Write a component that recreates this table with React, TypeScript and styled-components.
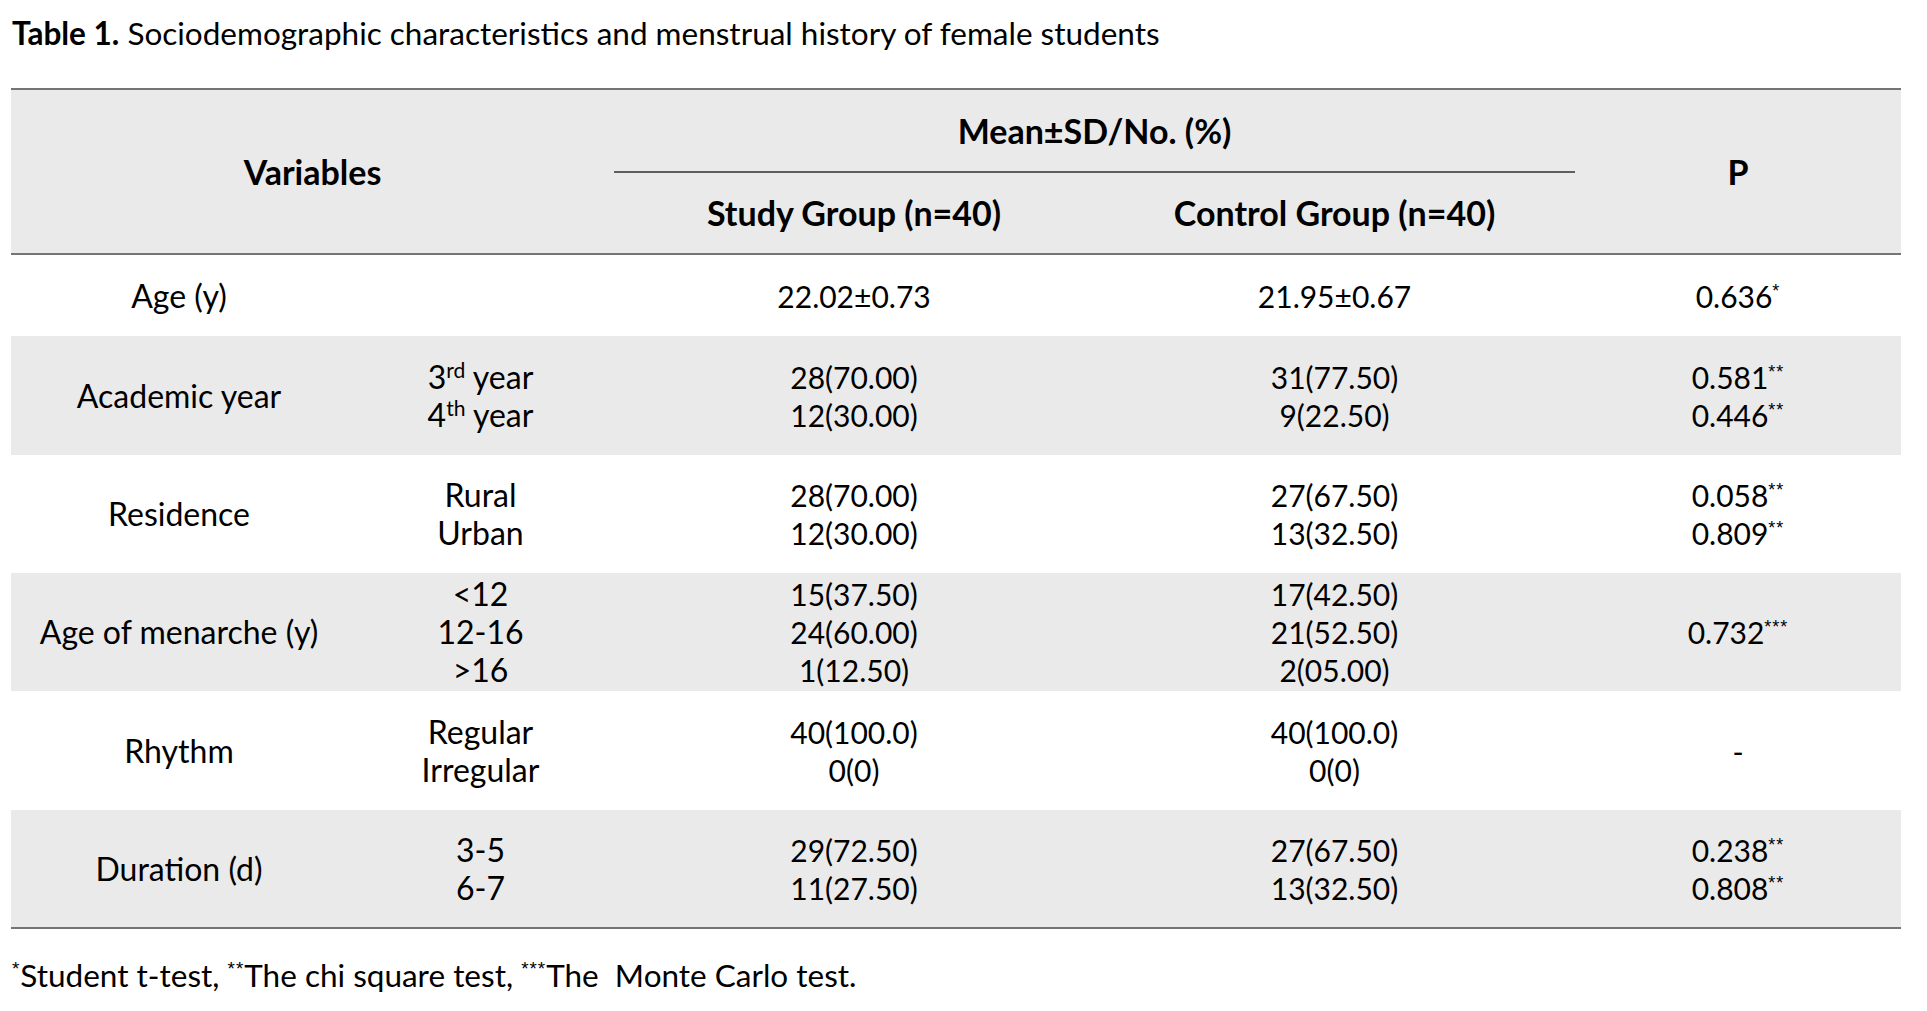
import React from "react";
import styled, { createGlobalStyle } from "styled-components";

const Global = createGlobalStyle`
  html, body { margin: 0; padding: 0; background: #ffffff; }
  body { font-family: Lato, "Open Sans", "Liberation Sans", sans-serif; color: #000; }
`;

const Page = styled.div`
  padding: 14px 26px 20px 11px;
  width: 1890px;
`;

const Title = styled.div`
  font-size: 31.5px;
  line-height: 38px;
  padding-left: 1px;
  margin-bottom: 36px;
  white-space: nowrap;
  b { font-weight: 700; }
`;

const Table = styled.table`
  width: 1890px;
  table-layout: fixed;
  border-collapse: separate;
  border-spacing: 0;
  line-height: 38px;
`;

const HeadCell = styled.th<{ $top?: boolean; $bottom?: boolean; $under?: boolean; $h: number }>`
  background: #eaeaea;
  font-weight: 700;
  font-size: 34px;
  text-align: center;
  vertical-align: middle;
  padding: 0;
  height: ${(p) => p.$h}px;
  border-top: ${(p) => (p.$top ? "2px solid #747474" : "none")};
  border-bottom: ${(p) =>
    p.$bottom ? "2px solid #747474" : p.$under ? "2px solid #5e5e5e" : "none"};
`;

const Cell = styled.td<{ $shaded: boolean; $h: number; $last: boolean; $text?: boolean }>`
  background: ${(p) => (p.$shaded ? "#eaeaea" : "#ffffff")};
  font-size: ${(p) => (p.$text ? "32px" : "30px")};
  text-align: center;
  vertical-align: middle;
  padding: 0;
  height: ${(p) => p.$h}px;
  border-bottom: ${(p) => (p.$last ? "2px solid #747474" : "none")};
`;

const Line = styled.div`
  white-space: nowrap;
`;

const Sup = styled.sup<{ $mark?: boolean }>`
  font-family: ${(p) => (p.$mark ? '"Liberation Sans", sans-serif' : "inherit")};
  font-size: ${(p) => (p.$mark ? "0.6em" : "0.66em")};
  line-height: 0;
  vertical-align: ${(p) => (p.$mark ? "0.62em" : "0.5em")};
  letter-spacing: ${(p) => (p.$mark ? "1px" : "0")};
`;

const Footnote = styled.div`
  margin-top: 27px;
  font-size: 31.5px;
  line-height: 38px;
  padding-left: 1px;
  white-space: pre;
`;

type Val = { t: string; s?: string; after?: string };
type Row = {
  label: string;
  sub: Val[];
  study: Val[];
  control: Val[];
  p: Val[];
  h: number;
  shaded: boolean;
};

const rows: Row[] = [
  {
    label: "Age (y)",
    sub: [],
    study: [{ t: "22.02±0.73" }],
    control: [{ t: "21.95±0.67" }],
    p: [{ t: "0.636", s: "*" }],
    h: 81,
    shaded: false,
  },
  {
    label: "Academic year",
    sub: [
      { t: "3", s: "rd", after: " year" },
      { t: "4", s: "th", after: " year" },
    ],
    study: [{ t: "28(70.00)" }, { t: "12(30.00)" }],
    control: [{ t: "31(77.50)" }, { t: "9(22.50)" }],
    p: [
      { t: "0.581", s: "**" },
      { t: "0.446", s: "**" },
    ],
    h: 119,
    shaded: true,
  },
  {
    label: "Residence",
    sub: [{ t: "Rural" }, { t: "Urban" }],
    study: [{ t: "28(70.00)" }, { t: "12(30.00)" }],
    control: [{ t: "27(67.50)" }, { t: "13(32.50)" }],
    p: [
      { t: "0.058", s: "**" },
      { t: "0.809", s: "**" },
    ],
    h: 118,
    shaded: false,
  },
  {
    label: "Age of menarche (y)",
    sub: [{ t: "<12" }, { t: "12-16" }, { t: ">16" }],
    study: [{ t: "15(37.50)" }, { t: "24(60.00)" }, { t: "1(12.50)" }],
    control: [{ t: "17(42.50)" }, { t: "21(52.50)" }, { t: "2(05.00)" }],
    p: [{ t: "0.732", s: "***" }],
    h: 118,
    shaded: true,
  },
  {
    label: "Rhythm",
    sub: [{ t: "Regular" }, { t: "Irregular" }],
    study: [{ t: "40(100.0)" }, { t: "0(0)" }],
    control: [{ t: "40(100.0)" }, { t: "0(0)" }],
    p: [{ t: "-" }],
    h: 119,
    shaded: false,
  },
  {
    label: "Duration (d)",
    sub: [{ t: "3-5" }, { t: "6-7" }],
    study: [{ t: "29(72.50)" }, { t: "11(27.50)" }],
    control: [{ t: "27(67.50)" }, { t: "13(32.50)" }],
    p: [
      { t: "0.238", s: "**" },
      { t: "0.808", s: "**" },
    ],
    h: 117,
    shaded: true,
  },
];

const Lines: React.FC<{ vals: Val[] }> = ({ vals }) => (
  <>
    {vals.map((v, i) => (
      <Line key={i}>
        {v.t}
        {v.s && <Sup $mark={v.s.startsWith("*")}>{v.s}</Sup>}
        {v.after}
      </Line>
    ))}
  </>
);

export default function App() {
  return (
    <>
      <Global />
      <Page>
        <Title>
          <b>Table 1.</b> Sociodemographic characteristics and menstrual history of female students
        </Title>
        <Table>
          <colgroup>
            <col style={{ width: 336 }} />
            <col style={{ width: 267 }} />
            <col style={{ width: 480 }} />
            <col style={{ width: 481 }} />
            <col style={{ width: 326 }} />
          </colgroup>
          <thead>
            <tr>
              <HeadCell colSpan={2} rowSpan={2} $top $bottom $h={81}>
                Variables
              </HeadCell>
              <HeadCell colSpan={2} $top $under $h={81}>
                Mean±SD/No. (%)
              </HeadCell>
              <HeadCell rowSpan={2} $top $bottom $h={81}>
                P
              </HeadCell>
            </tr>
            <tr>
              <HeadCell $bottom $h={80}>
                Study Group (n=40)
              </HeadCell>
              <HeadCell $bottom $h={80}>
                Control Group (n=40)
              </HeadCell>
            </tr>
          </thead>
          <tbody>
            {rows.map((r, i) => {
              const last = i === rows.length - 1;
              return (
                <tr key={r.label}>
                  <Cell $shaded={r.shaded} $h={r.h} $last={last} $text>
                    {r.label}
                  </Cell>
                  <Cell $shaded={r.shaded} $h={r.h} $last={last} $text>
                    <Lines vals={r.sub} />
                  </Cell>
                  <Cell $shaded={r.shaded} $h={r.h} $last={last}>
                    <Lines vals={r.study} />
                  </Cell>
                  <Cell $shaded={r.shaded} $h={r.h} $last={last}>
                    <Lines vals={r.control} />
                  </Cell>
                  <Cell $shaded={r.shaded} $h={r.h} $last={last}>
                    <Lines vals={r.p} />
                  </Cell>
                </tr>
              );
            })}
          </tbody>
        </Table>
        <Footnote>
          <Sup $mark>*</Sup>Student t-test, <Sup $mark>**</Sup>The chi square test, <Sup $mark>***</Sup>The  Monte Carlo test.
        </Footnote>
      </Page>
    </>
  );
}
